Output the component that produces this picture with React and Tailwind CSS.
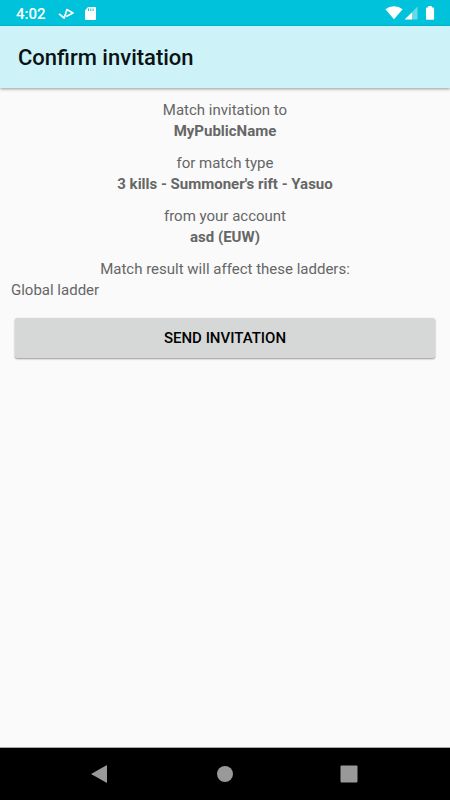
import React from 'react';

const details = [
  { label: 'Match invitation to', value: 'MyPublicName' },
  { label: 'for match type', value: "3 kills - Summoner's rift - Yasuo" },
  { label: 'from your account', value: 'asd (EUW)' },
];

const ladders = ['Global ladder'];

const StatusBar = () => (
  <div className="flex h-[26px] items-center justify-between bg-[#00c2da] pr-[14px] pl-4 text-white">
    <div className="flex items-center pt-px">
      <span className="text-[15px] leading-5 font-medium">4:02</span>
      <svg className="ml-3 h-4 w-4" viewBox="0 0 16 16" fill="none" stroke="currentColor" strokeWidth="1.7" strokeLinejoin="round">
        <path d="M1 7.8 L6.2 12 L8.9 3.6 L15 6.9 L8.2 10.6" />
      </svg>
      <svg className="ml-2 h-4 w-4" viewBox="0 0 16 16">
        <path fill="currentColor" d="M6 1 H13 Q14 1 14 2 V13 Q14 14 13 14 H4 Q3 14 3 13 V4.5 Z" />
        <path stroke="#00c2da" strokeWidth="1" d="M6.5 2.5 V5 M8.8 2.5 V5 M11.1 2.5 V5" />
      </svg>
    </div>
    <div className="flex items-center">
      <svg className="h-4 w-[18px]" viewBox="0 0 18 16" fill="currentColor">
        <path d="M9 14.2 L0.4 4.2 Q4 1.2 9 1.2 Q14 1.2 17.6 4.2 Z" />
      </svg>
      <svg className="ml-px h-4 w-4" viewBox="0 0 16 16" fill="currentColor">
        <path opacity="0.4" d="M13.5 1.5 V14.5 H8 V7.3 Z" />
        <path d="M8 7.3 V14.5 H0.6 Z" />
      </svg>
      <svg className="ml-1 h-4 w-3" viewBox="0 0 12 16" fill="currentColor">
        <path d="M4.2 1 H7.8 V2.4 H9.3 Q10.1 2.4 10.1 3.2 V14 Q10.1 14.8 9.3 14.8 H2.8 Q2 14.8 2 14 V3.2 Q2 2.4 2.8 2.4 H4.2 Z" />
      </svg>
    </div>
  </div>
);

const NavigationBar = () => (
  <nav className="grid h-[53px] grid-cols-[1fr_auto_1fr] items-center border-t border-[#a8a8a8] bg-black text-[#999999]">
    <button type="button" aria-label="Back" className="mr-[107px] justify-self-end">
      <svg className="h-5 w-5" viewBox="0 0 20 20" fill="currentColor">
        <path d="M17 1.2 V18.8 Q17 19 16.5 18.8 L1.5 10.3 Q1 10 1.5 9.7 L16.5 1.2 Z" />
      </svg>
    </button>
    <button type="button" aria-label="Home">
      <svg className="h-4 w-4" viewBox="0 0 16 16" fill="currentColor">
        <circle cx="8" cy="8" r="8" />
      </svg>
    </button>
    <button type="button" aria-label="Recent apps" className="ml-[107px] justify-self-start">
      <svg className="h-[18px] w-[18px]" viewBox="0 0 18 18" fill="currentColor">
        <rect x="0.5" y="0.5" width="17" height="17" rx="1" />
      </svg>
    </button>
  </nav>
);

const App = () => {
  return (
    <div className="flex min-h-screen flex-col bg-[#fafafa] font-['Roboto',sans-serif]">
      <StatusBar />

      <header className="flex h-[62px] items-center bg-[#cdf2f8] px-[18px] pt-px shadow-[0_1px_3px_rgba(0,0,0,0.4)]">
        <h1 className="text-[22px] leading-7 font-medium text-[#0a1214]">Confirm invitation</h1>
      </header>

      <main className="flex-1 px-[11px] pt-3 text-[15px] leading-[21px] text-[#666666]">
        <div className="flex flex-col gap-[11px] text-center">
          {details.map((item) => (
            <div key={item.label}>
              <p>{item.label}</p>
              <p className="font-bold">{item.value}</p>
            </div>
          ))}
          <p>Match result will affect these ladders:</p>
        </div>

        <ul>
          {ladders.map((ladder) => (
            <li key={ladder}>{ladder}</li>
          ))}
        </ul>

        <div className="px-1 pt-[17px]">
          <button
            type="button"
            className="h-10 w-full rounded-xs bg-[#d6d8d7] text-[15px] font-medium text-black uppercase shadow-[0_1px_2px_rgba(0,0,0,0.4)]"
          >
            Send invitation
          </button>
        </div>
      </main>

      <NavigationBar />
    </div>
  );
};

export default App;
